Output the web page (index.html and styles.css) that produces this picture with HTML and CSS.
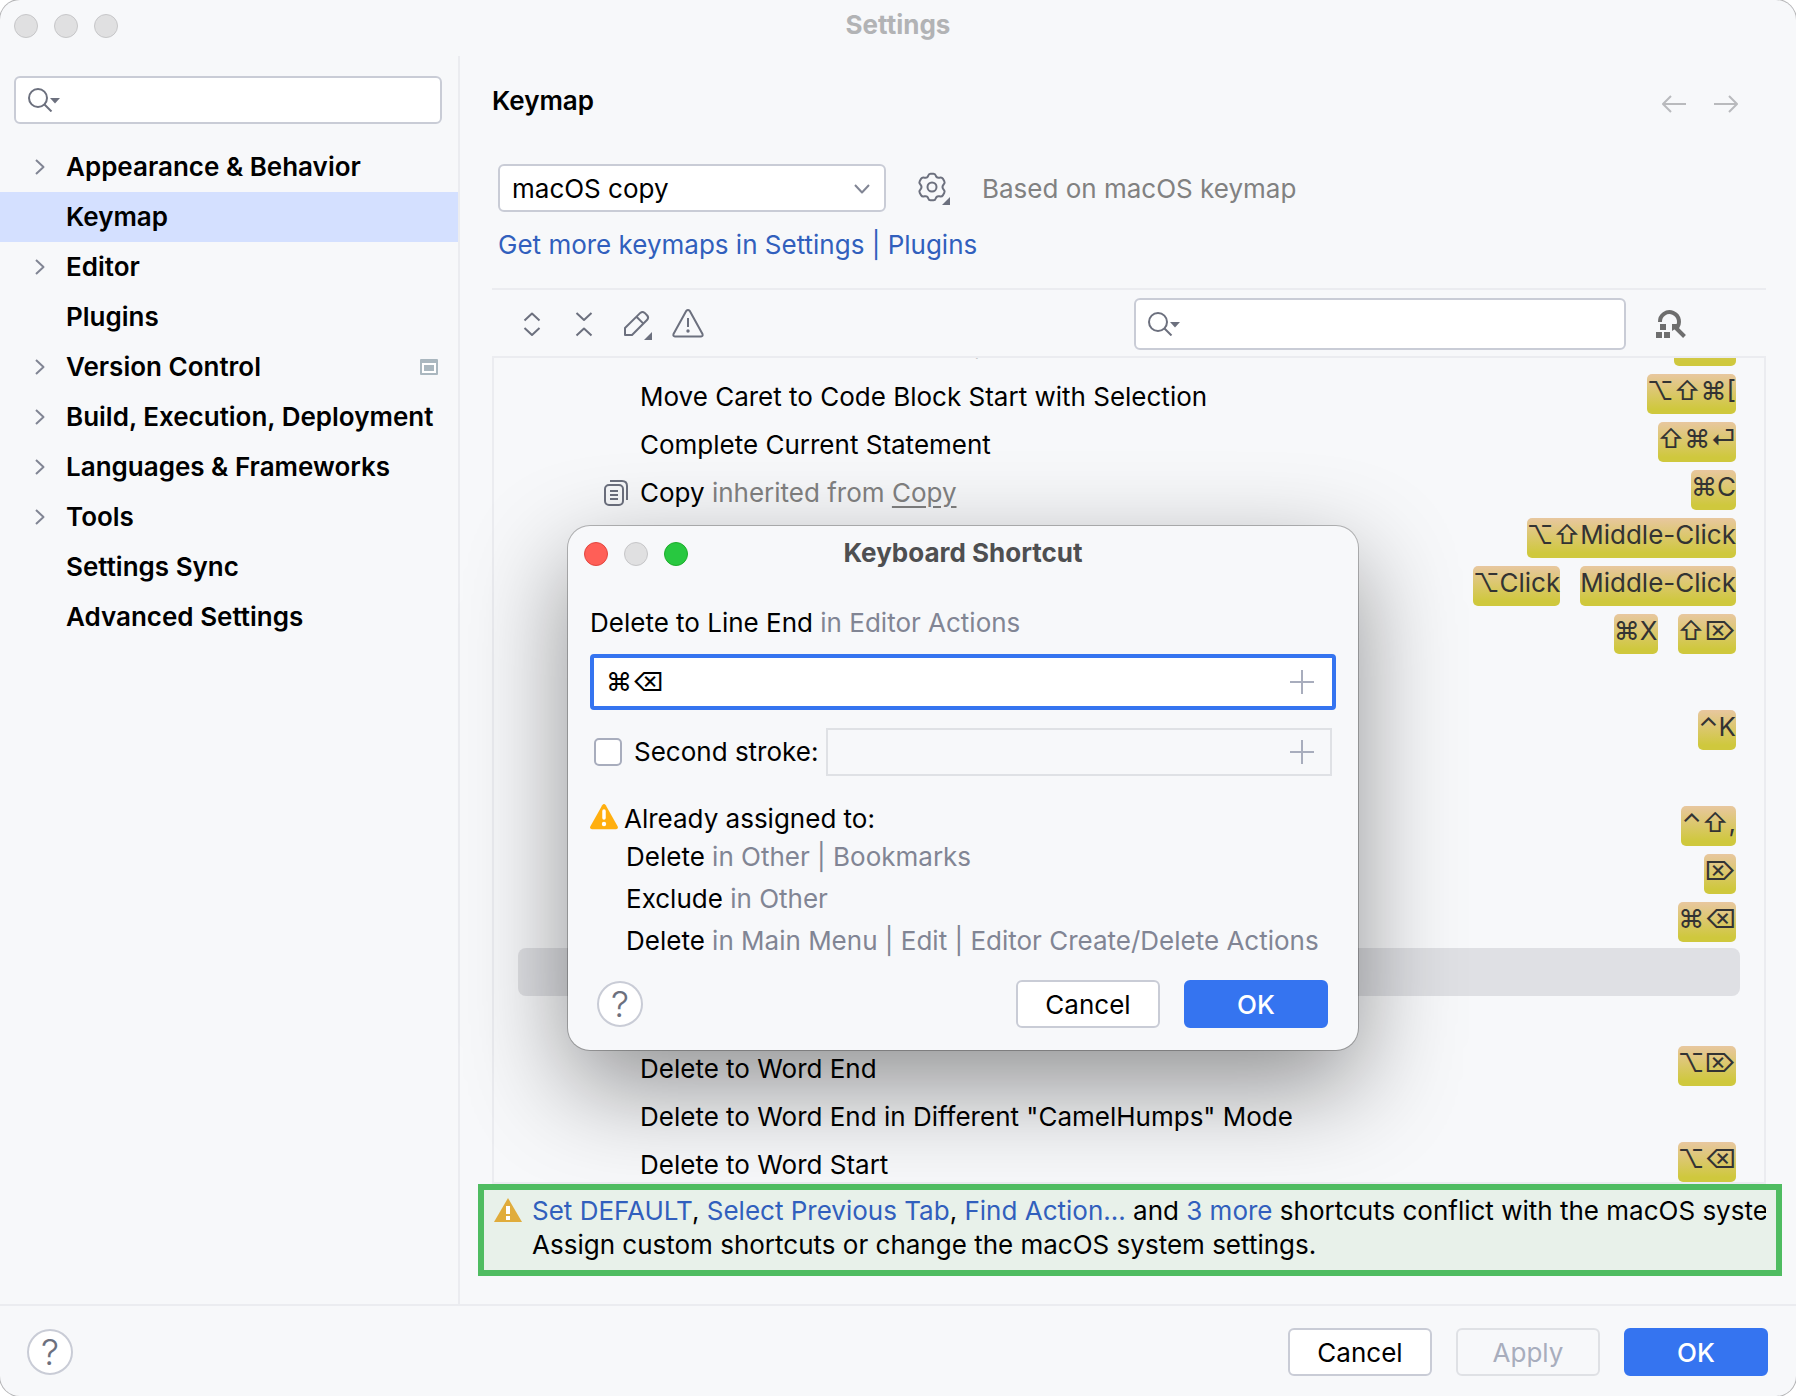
FILE: index.html
```html
<!DOCTYPE html>
<html lang="en">
<head>
<meta charset="utf-8">
<title>Settings</title>
<link rel="stylesheet" href="styles.css">
</head>
<body>
<svg class="sprite" aria-hidden="true">
  <symbol id="i-search" viewBox="0 0 32 24">
    <circle cx="10" cy="10" r="9"/>
    <path d="M16.5 16.5L23.5 23.5"/>
    <path class="fill" d="M22 10H32L27 15.5Z"/>
  </symbol>
  <symbol id="i-chevron" viewBox="0 0 10 16"><path d="M1 1L8.500 8L1 15"/></symbol>
  <symbol id="i-plus" viewBox="0 0 24 24"><path d="M12 0V24M0 12H24"/></symbol>
</svg>

<div class="window">
  <header class="titlebar">
    <div class="lights"><span class="light"></span><span class="light"></span><span class="light"></span></div>
    <h1 class="titlebar-text">Settings</h1>
  </header>

  <div class="body">
    <aside class="sidebar">
      <div class="search">
        <svg class="search-icon"><use href="#i-search"/></svg>
        <input class="search-input" type="text" aria-label="Search settings">
      </div>
      <nav>
        <ul class="tree">
          <li><a class="tree-row" href="#"><svg class="chevron"><use href="#i-chevron"/></svg><span>Appearance &amp; Behavior</span></a></li>
          <li><a class="tree-row selected" href="#"><span class="chevron"></span><span>Keymap</span></a></li>
          <li><a class="tree-row" href="#"><svg class="chevron"><use href="#i-chevron"/></svg><span>Editor</span></a></li>
          <li><a class="tree-row" href="#"><span class="chevron"></span><span>Plugins</span></a></li>
          <li><a class="tree-row" href="#"><svg class="chevron"><use href="#i-chevron"/></svg><span>Version Control</span>
            <svg class="project-icon" viewBox="0 0 18 16"><path fill="#fff" d="M2 2H16V14H2Z"/><path fill="none" stroke="#aab7bf" stroke-width="2" d="M1 1H17V15H1Z"/><path fill="#aab7bf" d="M1 1H17V4H1ZM4 6H14V12H4Z"/></svg></a></li>
          <li><a class="tree-row" href="#"><svg class="chevron"><use href="#i-chevron"/></svg><span>Build, Execution, Deployment</span></a></li>
          <li><a class="tree-row" href="#"><svg class="chevron"><use href="#i-chevron"/></svg><span>Languages &amp; Frameworks</span></a></li>
          <li><a class="tree-row" href="#"><svg class="chevron"><use href="#i-chevron"/></svg><span>Tools</span></a></li>
          <li><a class="tree-row" href="#"><span class="chevron"></span><span>Settings Sync</span></a></li>
          <li><a class="tree-row" href="#"><span class="chevron"></span><span>Advanced Settings</span></a></li>
        </ul>
      </nav>
    </aside>

    <main class="content">
      <div class="page-head">
        <h2 class="page-title">Keymap</h2>
        <div class="history">
          <button class="icon-button" aria-label="Back" disabled><svg viewBox="0 0 24 18"><path d="M24 9H1M9 1L1 9L9 17"/></svg></button>
          <button class="icon-button" aria-label="Forward" disabled><svg viewBox="0 0 24 18"><path d="M0 9H23M15 1L23 9L15 17"/></svg></button>
        </div>
      </div>

      <div class="scheme">
        <div class="combo">
          <select class="combo-select" aria-label="Keymap scheme"><option>macOS copy</option></select>
          <svg class="combo-arrow" viewBox="0 0 16 10"><path d="M1 1L8 8.500L15 1"/></svg>
        </div>
        <button class="icon-button" aria-label="Scheme actions">
          <svg class="icon gear" viewBox="-16 -16 34 34"><path d="M-1.500 -13.200H1.500Q3.200 -13.200 3.700 -11.400Q4.500 -8.600 7.500 -9.300Q9.800 -10 10.800 -8.400L12.300 -5.800Q13.200 -4.200 11.800 -2.800Q9.200 0 11.800 2.800Q13.200 4.200 12.300 5.800L10.800 8.400Q9.800 10 7.500 9.300Q4.500 8.600 3.700 11.400Q3.200 13.200 1.500 13.200H-1.500Q-3.200 13.200 -3.700 11.400Q-4.500 8.600 -7.500 9.300Q-9.800 10 -10.800 8.400L-12.300 5.800Q-13.200 4.200 -11.800 2.800Q-9.200 0 -11.800 -2.800Q-13.200 -4.200 -12.300 -5.800L-10.800 -8.400Q-9.800 -10 -7.500 -9.300Q-4.500 -8.600 -3.700 -11.400Q-3.200 -13.200 -1.500 -13.200Z"/><circle r="4.500"/><path class="fill" d="M18 10V18H10Z"/></svg>
        </button>
        <span class="hint">Based on macOS keymap</span>
      </div>
      <a class="link more" href="#">Get more keymaps in Settings | Plugins</a>

      <div class="toolbar">
        <button class="icon-button" aria-label="Expand all"><svg class="icon" viewBox="0 0 32 32"><path d="M8.500 12.500L16 5.500L23.500 12.500M8.500 20L16 27L23.500 20"/></svg></button>
        <button class="icon-button" aria-label="Collapse all"><svg class="icon" viewBox="0 0 32 32"><path d="M8.500 5L16 12L23.500 5M8.500 27.500L16 20.500L23.500 27.500"/></svg></button>
        <button class="icon-button" aria-label="Edit shortcut"><svg class="icon" viewBox="0 0 32 32"><path d="M5 27V20L20.300 4.900Q22.500 3 24.700 4.900L27.200 7.500Q29 9.600 27.200 11.800L12 27ZM16.500 8.700L23.400 15.600"/><path class="fill" d="M32 24V32H24Z"/></svg></button>
        <button class="icon-button" aria-label="Show conflicts"><svg class="icon" viewBox="0 0 32 32"><path d="M14.200 3Q16 1.200 17.800 3L30.500 26Q31.200 28.300 29 28.500H3Q.800 28.300 1.500 26ZM16 10V19"/><circle class="fill" cx="16" cy="23" r="1.700"/></svg></button>
        <div class="search toolbar-search">
          <svg class="search-icon"><use href="#i-search"/></svg>
          <input class="search-input" type="text" aria-label="Search actions">
        </div>
        <button class="icon-button" aria-label="Find actions by shortcut"><svg class="icon" viewBox="0 0 32 32"><path stroke="#6e6e6e" stroke-width="4" d="M4 14A9.500 9.500 0 1 1 20 20.500M17.500 17.500L28.500 28.500"/><path fill="#6e6e6e" d="M4 16H10V22H4ZM0 24H6V30H0ZM8 24H14V30H8ZM16 16H21L22 19L16 23Z"/></svg></button>
      </div>

      <div class="actions">
        <ul class="action-list">
          <li class="action"><span class="action-icon"></span><span>Move Caret to Code Block Start</span><span class="keys"><kbd>⌥⌘[</kbd></span></li>
          <li class="action"><span class="action-icon"></span><span>Move Caret to Code Block Start with Selection</span><span class="keys"><kbd>⌥⇧⌘[</kbd></span></li>
          <li class="action"><span class="action-icon"></span><span>Complete Current Statement</span><span class="keys"><kbd>⇧⌘⏎</kbd></span></li>
          <li class="action"><svg class="action-icon" viewBox="0 0 24 26"><rect x="1" y="5" width="18" height="20" rx="4"/><path d="M6 1H18Q23 1 23 6V20M6 11H14M6 15H14M6 19H14"/></svg><span>Copy <span class="inherited">inherited from <a href="#">Copy</a></span></span><span class="keys"><kbd>⌘C</kbd></span></li>
          <li class="action"><span class="keys"><kbd>⌥⇧Middle-Click</kbd></span></li>
          <li class="action"><span class="keys"><kbd>⌥Click</kbd><kbd>Middle-Click</kbd></span></li>
          <li class="action"><span class="keys"><kbd>⌘X</kbd><kbd>⇧⌦</kbd></span></li>
          <li class="action"></li>
          <li class="action"><span class="keys"><kbd>⌃K</kbd></span></li>
          <li class="action"></li>
          <li class="action"><span class="keys"><kbd>⌃⇧,</kbd></span></li>
          <li class="action"><span class="keys"><kbd>⌦</kbd></span></li>
          <li class="action"><span class="keys"><kbd>⌘⌫</kbd></span></li>
          <li class="action selected"></li>
          <li class="action"></li>
          <li class="action"><span class="action-icon"></span><span>Delete to Word End</span><span class="keys"><kbd>⌥⌦</kbd></span></li>
          <li class="action"><span class="action-icon"></span><span>Delete to Word End in Different "CamelHumps" Mode</span></li>
          <li class="action"><span class="action-icon"></span><span>Delete to Word Start</span><span class="keys"><kbd>⌥⌫</kbd></span></li>
        </ul>
      </div>

      <div class="conflicts">
        <svg class="conflicts-icon" viewBox="0 0 28 24"><path fill="#e0ac3c" d="M14 0L28 24H0Z"/><path fill="#fff" d="M12 8H16V16H12ZM12 18H16V22H12Z"/></svg>
        <div class="conflicts-text">
          <p><a class="link" href="#">Set DEFAULT</a>, <a class="link" href="#">Select Previous Tab</a>, <a class="link" href="#">Find Action...</a> and <a class="link" href="#">3 more</a> shortcuts conflict with the macOS system shortcuts.</p>
          <p>Assign custom shortcuts or change the macOS system settings.</p>
        </div>
      </div>
    </main>
  </div>

  <footer class="footer">
    <button class="help" aria-label="Help">?</button>
    <button class="button">Cancel</button>
    <button class="button" disabled>Apply</button>
    <button class="button primary">OK</button>
  </footer>
</div>

<section class="dialog" role="dialog" aria-labelledby="dialog-title">
  <header class="titlebar">
    <div class="lights"><span class="light red"></span><span class="light"></span><span class="light green"></span></div>
    <h2 class="titlebar-text" id="dialog-title">Keyboard Shortcut</h2>
  </header>
  <form class="dialog-form">
    <label class="stroke-label" for="first-stroke">Delete to Line End <span class="muted">in Editor Actions</span></label>
    <div class="stroke focused">
      <input class="stroke-input" id="first-stroke" type="text" value="⌘⌫">
      <button class="icon-button" type="button" aria-label="Add key"><svg class="plus"><use href="#i-plus"/></svg></button>
    </div>
    <div class="second">
      <input class="checkbox" id="second-on" type="checkbox">
      <label for="second-on">Second stroke:</label>
      <div class="stroke">
        <input class="stroke-input" type="text" aria-label="Second stroke" disabled>
        <button class="icon-button" type="button" aria-label="Add key"><svg class="plus"><use href="#i-plus"/></svg></button>
      </div>
    </div>
    <p class="assigned">
      <svg class="assigned-icon" viewBox="0 0 28 26"><path fill="#ffaf0f" d="M12.200 1.200Q14 -1 15.800 1.200L27.700 22.500Q28.500 25 26 25.300H2Q-.500 25 .300 22.500Z"/><path stroke="#fff" stroke-width="3.500" stroke-linecap="round" d="M14 7V14"/><circle fill="#fff" cx="14" cy="20" r="2.200"/></svg>
      Already assigned to:</p>
    <ul class="assigned-list">
      <li>Delete <span class="muted">in Other | Bookmarks</span></li>
      <li>Exclude <span class="muted">in Other</span></li>
      <li>Delete <span class="muted">in Main Menu | Edit | Editor Create/Delete Actions</span></li>
    </ul>
    <div class="dialog-buttons">
      <button class="help" type="button" aria-label="Help">?</button>
      <button class="button" type="button">Cancel</button>
      <button class="button primary" type="button">OK</button>
    </div>
  </form>
</section>
</body>
</html>
```
FILE: styles.css
```css
:root {
  --bg: #f7f8fa;
  --line: #ebecf0;
  --border: #c9ccd6;
  --icon: #6c707e;
  --blue: #3574f0;
  --link: #315fbd;
}

* {
  box-sizing: border-box;
}

body {
  margin: 0;
  background: #fff;
  color: #000;
  font: 26px/32px Inter, "Noto Sans", "DejaVu Sans", sans-serif;
}

h1, h2, p, ul {
  margin: 0;
  padding: 0;
}

ul {
  list-style: none;
}

button, input, select {
  font: inherit;
  color: inherit;
}

svg {
  display: block;
  flex: none;
  fill: none;
  stroke: var(--icon);
  stroke-width: 2;
  stroke-linejoin: round;
}

svg .fill {
  fill: var(--icon);
  stroke: none;
}

svg [fill]:not([stroke]) {
  stroke: none;
}

.sprite {
  position: absolute;
  width: 0;
  height: 0;
}

.window {
  display: flex;
  flex-direction: column;
  height: 100vh;
  overflow: hidden;
  border-radius: 20px;
  background: var(--bg);
  box-shadow: 0 0 0 1px #b4b4b6;
}

/* Title bars */

.titlebar {
  display: grid;
  grid-template-columns: 1fr auto 1fr;
  align-items: center;
  height: 56px;
  padding: 0 14px 4px;
}

.titlebar-text {
  padding-bottom: 2px;
  font-size: 26px;
  font-weight: 700;
  line-height: 32px;
  color: #b2b3b5;
}

.lights {
  display: flex;
  gap: 16px;
}

.light {
  width: 24px;
  height: 24px;
  border: 1px solid #c6c6c8;
  border-radius: 50%;
  background: #e0e0e1;
}

.light.red {
  border-color: #e2463f;
  background: #ff5f57;
}

.light.green {
  border-color: #1dad2b;
  background: #28c840;
}

/* Sidebar */

.body {
  display: flex;
  flex: 1;
  min-height: 0;
}

.sidebar {
  flex: none;
  width: 460px;
  padding-top: 20px;
  border-right: 2px solid var(--line);
}

.search {
  display: flex;
  align-items: center;
  height: 48px;
  padding-left: 12px;
  border: 2px solid var(--border);
  border-radius: 6px;
  background: #fff;
}

.sidebar .search {
  margin: 0 16px 18px 14px;
}

.search-icon {
  width: 32px;
  height: 24px;
}

.search-input {
  flex: 1;
  min-width: 0;
  padding: 0 8px;
  border: 0;
  outline: 0;
  background: none;
}

.tree-row {
  display: flex;
  align-items: center;
  gap: 21px;
  height: 50px;
  padding: 0 20px 0 35px;
  color: #000;
  font-weight: 600;
  text-decoration: none;
  white-space: nowrap;
}

.tree-row.selected {
  background: #d4e0ff;
}

.chevron {
  flex: none;
  width: 10px;
  height: 16px;
  stroke: #818594;
}

.project-icon {
  width: 18px;
  height: 16px;
  margin-left: auto;
}

/* Keymap page */

.content {
  display: flex;
  flex: 1;
  flex-direction: column;
  min-width: 0;
  padding: 28px 14px 28px 18px;
}

.page-head,
.scheme,
.toolbar,
.actions {
  margin-right: 16px;
  margin-left: 14px;
}

.page-head {
  display: flex;
  align-items: center;
  justify-content: space-between;
  padding-right: 28px;
}

.page-title {
  font-size: 26px;
  font-weight: 600;
  line-height: 34px;
}

.history {
  display: flex;
  gap: 28px;
  padding-top: 6px;
}

.history svg {
  width: 24px;
  height: 18px;
  stroke: #b9babd;
}

.icon-button {
  flex: none;
  padding: 0;
  border: 0;
  background: none;
}

.icon {
  width: 32px;
  height: 32px;
}

.icon.gear {
  width: 34px;
  height: 34px;
}

.scheme {
  display: flex;
  align-items: center;
  margin-top: 46px;
  padding-left: 6px;
}

.combo {
  display: grid;
  align-items: center;
  width: 388px;
  margin-right: 30px;
}

.combo-select,
.combo-arrow {
  grid-area: 1 / 1;
}

.combo-select {
  appearance: none;
  width: 100%;
  height: 48px;
  padding: 2px 12px 0;
  border: 2px solid var(--border);
  border-radius: 6px;
  background: #fff;
}

.combo-arrow {
  justify-self: end;
  width: 16px;
  height: 10px;
  margin-top: 2px;
  margin-right: 16px;
  stroke: #818594;
  pointer-events: none;
}

.hint {
  margin-left: 32px;
  padding-top: 2px;
  color: #818181;
}

.link {
  color: var(--link);
  text-decoration: none;
}

.more {
  margin: 17px 0 27px 20px;
}

.toolbar {
  display: flex;
  align-items: center;
  gap: 20px;
  height: 68px;
  padding: 2px 78px 0 24px;
  border-top: 2px solid var(--line);
}

.toolbar-search {
  width: 492px;
  height: 52px;
  margin-right: 10px;
  margin-left: auto;
}

.actions {
  flex: 1;
  min-height: 0;
  overflow: hidden;
  border: 2px solid var(--line);
}

/* The list is scrolled part of the way into its first row. */
.action-list {
  margin-top: -34px;
  padding: 0 24px;
}

.action {
  display: flex;
  align-items: center;
  gap: 12px;
  height: 48px;
  padding: 2px 4px 0 86px;
  white-space: nowrap;
}

.action.selected {
  border-radius: 8px;
  background: #dfe0e4;
}

.action-icon {
  flex: none;
  width: 24px;
  height: 26px;
}

.inherited,
.inherited a {
  color: #818181;
}

.inherited a {
  text-underline-offset: 4px;
}

.keys {
  display: flex;
  gap: 20px;
  margin-left: auto;
  padding-bottom: 6px;
}

kbd {
  height: 40px;
  border-radius: 5px;
  background: linear-gradient(#e8c79f, #cfc83d 88%);
  color: #333;
  font: 26px/34px Inter, "DejaVu Sans", sans-serif;
}

.conflicts {
  position: relative;
  z-index: 1;
  display: flex;
  gap: 10px;
  height: 92px;
  padding: 4px 10px;
  border: 6px solid #4fbc61;
  background: #e8f1ea;
}

.conflicts-icon {
  width: 28px;
  height: 24px;
  margin-top: 4px;
}

.conflicts-text {
  min-width: 0;
  overflow: hidden;
  line-height: 34px;
  white-space: nowrap;
}

/* Buttons */

.footer,
.dialog-buttons {
  display: flex;
  align-items: center;
  gap: 24px;
}

.footer {
  flex: none;
  height: 92px;
  padding: 2px 28px 0 27px;
  border-top: 2px solid var(--line);
}

.help {
  width: 46px;
  height: 46px;
  margin-right: auto;
  padding: 0;
  border: 2px solid var(--border);
  border-radius: 50%;
  background: #fff;
  color: var(--icon);
  font-size: 36px;
  font-weight: 300;
  line-height: 42px;
}

.button {
  width: 144px;
  height: 48px;
  padding: 2px 0 0;
  border: 2px solid var(--border);
  border-radius: 6px;
  background: #fff;
}

.button:disabled {
  border-color: #dfe1e5;
  background: none;
  color: #a8adbd;
}

.button.primary {
  border-color: var(--blue);
  background: var(--blue);
  color: #fff;
  font-weight: 500;
}

/* Keyboard Shortcut dialog */

.dialog {
  position: absolute;
  top: 526px;
  left: 568px;
  width: 790px;
  padding-bottom: 22px;
  border-radius: 22px;
  background: var(--bg);
  box-shadow: 0 0 0 1px rgba(0, 0, 0, .25), 0 36px 100px rgba(0, 0, 0, .42);
}

.dialog .titlebar {
  padding: 0 16px;
}

.dialog .titlebar-text {
  color: #4e4f51;
}

.dialog-form {
  padding: 25px 22px 0;
}

.stroke-label {
  display: block;
  margin-bottom: 15px;
}

.muted {
  color: #818594;
}

.stroke {
  display: flex;
  flex: 1;
  align-items: center;
  height: 48px;
  padding-right: 16px;
  border: 2px solid #dfe1e5;
}

.stroke.focused {
  height: 56px;
  padding-right: 18px;
  border: 4px solid var(--blue);
  border-radius: 4px;
  background: #fff;
}

.stroke-input {
  flex: 1;
  min-width: 0;
  padding: 0 12px;
  border: 0;
  outline: 0;
  background: none;
}

.plus {
  width: 24px;
  height: 24px;
  stroke: #a8adbd;
}

.second {
  display: flex;
  align-items: center;
  gap: 8px;
  margin: 18px 4px 27px;
}

.checkbox {
  appearance: none;
  width: 28px;
  height: 28px;
  margin: 0 4px 0 0;
  border: 2px solid #a8adbd;
  border-radius: 5px;
  background: #fff;
}

.assigned {
  display: flex;
  align-items: center;
  gap: 6px;
}

.assigned-icon {
  width: 28px;
  height: 26px;
  margin-bottom: 4px;
}

.assigned-list {
  margin-top: 1px;
  margin-bottom: 18px;
  padding-left: 36px;
  line-height: 42px;
  white-space: nowrap;
}

.dialog-buttons {
  padding: 0 8px 0 7px;
}
```
